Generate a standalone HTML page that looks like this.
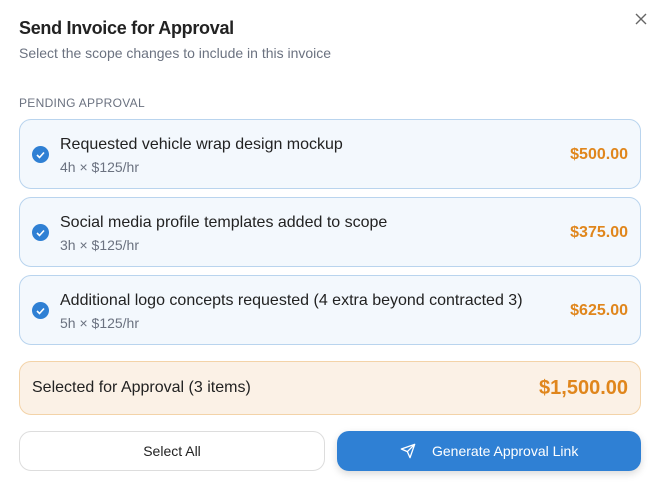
<!DOCTYPE html><html><head><style>
body{margin:0;width:661px;height:491px;background:#fff;font-family:"Liberation Sans",sans-serif;position:relative;overflow:hidden}
.a{position:absolute}
.card{position:absolute;left:19px;width:620px;height:68px;border:1px solid #b9d4ee;background:#f3f8fd;border-radius:12px}
.chk{position:absolute;left:12px;top:26px;width:17px;height:17px;border-radius:50%;background:#2f80d4}
.t{position:absolute;left:40px;top:16px;font-size:16px;color:#222}
.s{position:absolute;left:40px;top:39px;font-size:14px;color:#6b7280}
.p{position:absolute;right:12px;top:26px;font-size:16px;font-weight:bold;color:#e0861c}
</style></head><body>
<div class="a" style="left:19px;top:18px;font-size:18px;font-weight:bold;color:#222;letter-spacing:-0.3px">Send Invoice for Approval</div>
<div class="a" style="left:19px;top:45px;font-size:14px;color:#6b7280">Select the scope changes to include in this invoice</div>
<svg class="a" style="left:635px;top:13px" width="12" height="12" viewBox="0 0 12 12"><path d="M1 1L11 11M11 1L1 11" stroke="#666" stroke-width="1.4"/></svg>
<div class="a" style="left:19px;top:96px;font-size:12px;color:#6b7280;letter-spacing:0.3px">PENDING APPROVAL</div>
<div class="card" style="top:119px"><div class="chk"><svg width="17" height="17"><path d="M5 9l2.5 2.5L12 6.5" stroke="#fff" stroke-width="1.6" fill="none"/></svg></div><div class="t">Requested vehicle wrap design mockup</div><div class="s">4h × $125/hr</div><div class="p">$500.00</div></div>
<div class="card" style="top:197px"><div class="chk"><svg width="17" height="17"><path d="M5 9l2.5 2.5L12 6.5" stroke="#fff" stroke-width="1.6" fill="none"/></svg></div><div class="t">Social media profile templates added to scope</div><div class="s">3h × $125/hr</div><div class="p">$375.00</div></div>
<div class="card" style="top:275px"><div class="chk"><svg width="17" height="17"><path d="M5 9l2.5 2.5L12 6.5" stroke="#fff" stroke-width="1.6" fill="none"/></svg></div><div class="t">Additional logo concepts requested (4 extra beyond contracted 3)</div><div class="s">5h × $125/hr</div><div class="p">$625.00</div></div>
<div class="a" style="left:19px;top:361px;width:620px;height:52px;border:1px solid #f3d3a8;background:#fbf1e6;border-radius:12px">
<div class="a" style="left:12px;top:17px;font-size:16px;color:#222">Selected for Approval (3 items)</div>
<div class="a" style="right:12px;top:15px;font-size:20px;font-weight:bold;color:#e0861c">$1,500.00</div></div>
<div class="a" style="left:19px;top:431px;width:304px;height:38px;border:1px solid #ddd;border-radius:12px;text-align:center;line-height:38px;font-size:14px;color:#222">Select All</div>
<div class="a" style="left:337px;top:431px;width:304px;height:40px;background:#2f80d4;border-radius:12px;box-shadow:0 3px 8px rgba(0,0,0,.15);color:#fff;font-size:14px;line-height:40px"><svg class="a" style="left:63px;top:12px" width="16" height="16" viewBox="0 0 24 24"><path d="M22 2L11 13M22 2l-7 20-4-9-9-4z" stroke="#fff" stroke-width="2" fill="none" stroke-linejoin="round"/></svg><span class="a" style="left:95px">Generate Approval Link</span></div>
</body></html>
